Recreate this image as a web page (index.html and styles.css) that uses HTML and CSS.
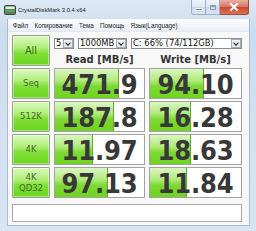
FILE: index.html
```html
<!DOCTYPE html>
<html>
<head>
<meta charset="utf-8">
<link rel="stylesheet" href="styles.css">
</head>
<body>
<div class="window">
  <div class="titlebar">
    <svg class="appicon" viewBox="0 0 12 10" width="12" height="10">
      <rect x="0.5" y="0.5" width="11" height="9" rx="1" fill="#6b776b" stroke="#3f4a3f" stroke-width="1"/>
      <rect x="1.5" y="1.5" width="9" height="2.5" fill="#dfe9df"/>
      <rect x="1.5" y="5" width="9" height="1.5" fill="#3ec83e"/>
    </svg>
    <span class="title">CrystalDiskMark 3.0.4 x64</span>
    <div class="caption">
      <div class="cbtn cmin"><span class="minbar"></span></div>
      <div class="cbtn cmax"><span class="maxbox"></span></div>
      <div class="cbtn cclose">
        <svg viewBox="0 0 10 8" width="10" height="8"><path d="M2 1 L8 7 M8 1 L2 7" stroke="#ffffff" stroke-width="2" stroke-linecap="square" fill="none"/></svg>
      </div>
    </div>
  </div>
  <div class="frame">
    <div class="menubar">
      <span class="mi">Файл</span>
      <span class="mi">Копирование</span>
      <span class="mi">Тема</span>
      <span class="mi">Помощь</span>
      <span class="mi">Язык(Language)</span>
    </div>
    <div class="client">
      <div class="grid">
        <div class="btn all">All</div>
        <div class="controls">
          <div class="combo cnum"><span class="ctext">5</span><span class="arrow"></span></div>
          <div class="combo csize"><span class="ctext">1000MB</span><span class="arrow"></span></div>
          <div class="combo cdrive"><span class="ctext">C: 66% (74/112GB)</span><span class="arrow"></span></div>
        </div>
        <div class="head">Read [MB/s]</div>
        <div class="head">Write [MB/s]</div>

        <div class="btn">Seq</div>
        <div class="val"><div class="bar" style="width:72%"></div><span class="num">471.9</span></div>
        <div class="val"><div class="bar" style="width:59%"></div><span class="num">94.10</span></div>

        <div class="btn">512K</div>
        <div class="val"><div class="bar" style="width:66%"></div><span class="num">187.8</span></div>
        <div class="val"><div class="bar" style="width:45%"></div><span class="num">16.28</span></div>

        <div class="btn">4K</div>
        <div class="val"><div class="bar" style="width:43%"></div><span class="num">11.97</span></div>
        <div class="val"><div class="bar" style="width:45%"></div><span class="num">18.63</span></div>

        <div class="btn two">4K<br>QD32</div>
        <div class="val"><div class="bar" style="width:60%"></div><span class="num">97.13</span></div>
        <div class="val"><div class="bar" style="width:41%"></div><span class="num">11.84</span></div>
      </div>
      <div class="comment"></div>
    </div>
  </div>
</div>
</body>
</html>
```

FILE: styles.css
```css
* { box-sizing: border-box; }
html, body { margin: 0; padding: 0; }
body {
  width: 256px;
  height: 231px;
  overflow: hidden;
  font-family: "DejaVu Sans", sans-serif;
  background: #cddcee;
}
.window {
  width: 256px;
  height: 231px;
  display: flex;
  flex-direction: column;
  background: linear-gradient(#dde8f5, #cbdcef 30px, #d2e0f0 120px, #d8e4f2);
}
.titlebar {
  height: 19px;
  display: flex;
  align-items: center;
  padding-left: 4px;
}
.appicon { display: block; margin-right: 2px; margin-top: 1px; }
.title {
  font-family: "Liberation Sans", sans-serif;
  font-size: 5.8px;
  color: #1a1a1a;
  margin-top: 1px;
}
.caption {
  margin-left: auto;
  margin-right: 7px;
  align-self: flex-start;
  display: flex;
}
.cbtn {
  height: 15px;
  display: flex;
  align-items: center;
  justify-content: center;
  border: 1px solid #9aaec6;
  border-top: none;
}
.cmin {
  width: 15px;
  border-radius: 0 0 0 3px;
  background: linear-gradient(#f1f5fa, #dbe4ef 50%, #cbd8e8 51%, #dce6f2);
}
.cmax {
  width: 14px;
  border-left: none;
  background: linear-gradient(#f1f5fa, #dbe4ef 50%, #cbd8e8 51%, #dce6f2);
}
.cclose {
  width: 29px;
  border-left: none;
  border-color: #9a4a3e;
  border-radius: 0 0 3px 0;
  background: linear-gradient(#eab0a4, #d87460 50%, #c8482f 51%, #da7458);
}
.minbar {
  display: block;
  width: 6px;
  margin-top: 4px;
  background: #6d7f96;
  border: 1px solid #f4f7fb;
  box-sizing: content-box;
  height: 1px;
}
.maxbox {
  display: block;
  width: 6px;
  height: 5px;
  border: 1px solid #8e9db1;
  border-top-width: 2px;
}
.cclose svg { display: block; }

.frame {
  flex: 1;
  margin: 0 6px 5px 7px;
  display: flex;
  flex-direction: column;
  border: 1px solid #aabbd0;
  border-top: none;
}
.menubar {
  height: 13px;
  display: flex;
  align-items: center;
  padding-left: 2px;
  background: linear-gradient(#fcfdfe, #f1f5fa 60%, #e8eef5);
  border-bottom: 1px solid #e2e8ef;
  font-family: "Liberation Sans", sans-serif;
  font-size: 6.3px;
  color: #1c1c1c;
}
.mi { padding: 0 3.4px 0 2.8px; }
.client {
  flex: 1;
  background: #f8f8f8;
  padding: 3px 0 0 4px;
}
.grid {
  display: grid;
  grid-template-columns: 38px 91px 93px;
  grid-template-rows: 14px 15px repeat(4, 31px);
  column-gap: 4px;
  row-gap: 2px;
  width: 230px;
}
.btn {
  display: flex;
  align-items: center;
  justify-content: center;
  text-align: center;
  border: 1px solid #959f92;
  border-radius: 1px;
  background: linear-gradient(#dcf9bf, #b0ee78 40%, #80de38 60%, #6cd61e);
  box-shadow: inset 0 0 0 1px rgba(255,255,255,0.4);
  color: #48682c;
  font-size: 8.5px;
  line-height: 11px;
}
.btn.all {
  grid-row: 1 / 3;
  font-size: 9.8px;
  color: #3f6a1c;
}
.controls {
  grid-column: 2 / 4;
  display: flex;
  gap: 4px;
  align-items: center;
  padding-top: 2px;
}
.combo {
  height: 11px;
  display: flex;
  align-items: center;
  background: #ffffff;
  border: 1px solid #8c8c8c;
  font-size: 8.4px;
  color: #111;
}
.cnum { width: 20px; }
.csize { width: 49px; }
.cdrive { flex: 1; }
.ctext { padding-left: 1px; flex: 1; white-space: nowrap; overflow: hidden; }
.arrow {
  width: 10px;
  height: 9px;
  border: 1px solid #a5acb5;
  background: linear-gradient(#f4f5f6, #dfe2e6);
  position: relative;
}
.arrow::after {
  content: "";
  position: absolute;
  left: 2px;
  top: 1px;
  width: 3px;
  height: 3px;
  border-right: 1.5px solid #222;
  border-bottom: 1.5px solid #222;
  transform: rotate(45deg);
}
.head {
  text-align: center;
  font-weight: bold;
  font-size: 10px;
  line-height: 15px;
  color: #333;
  padding-top: 1px;
}
.val {
  position: relative;
  background: #ffffff;
  border: 1px solid #a2a2a2;
  display: flex;
  align-items: center;
  justify-content: center;
  overflow: hidden;
}
.bar {
  position: absolute;
  left: 0;
  top: 0;
  bottom: 0;
  background: linear-gradient(#dcf6c2, #b0ea7c 40%, #7ed834 60%, #70d420);
  border-right: 1px solid #62ac2c;
}
.num {
  position: relative;
  font-family: "DejaVu Sans Condensed", "DejaVu Sans", sans-serif;
  font-stretch: condensed;
  font-weight: bold;
  font-size: 27px;
  line-height: 29px;
  color: #383838;
  letter-spacing: -0.2px;
  padding-top: 1px;
}
.comment {
  margin-top: 6px;
  width: 230px;
  height: 18px;
  background: #ffffff;
  border: 1px solid #a8a8a8;
}
```
